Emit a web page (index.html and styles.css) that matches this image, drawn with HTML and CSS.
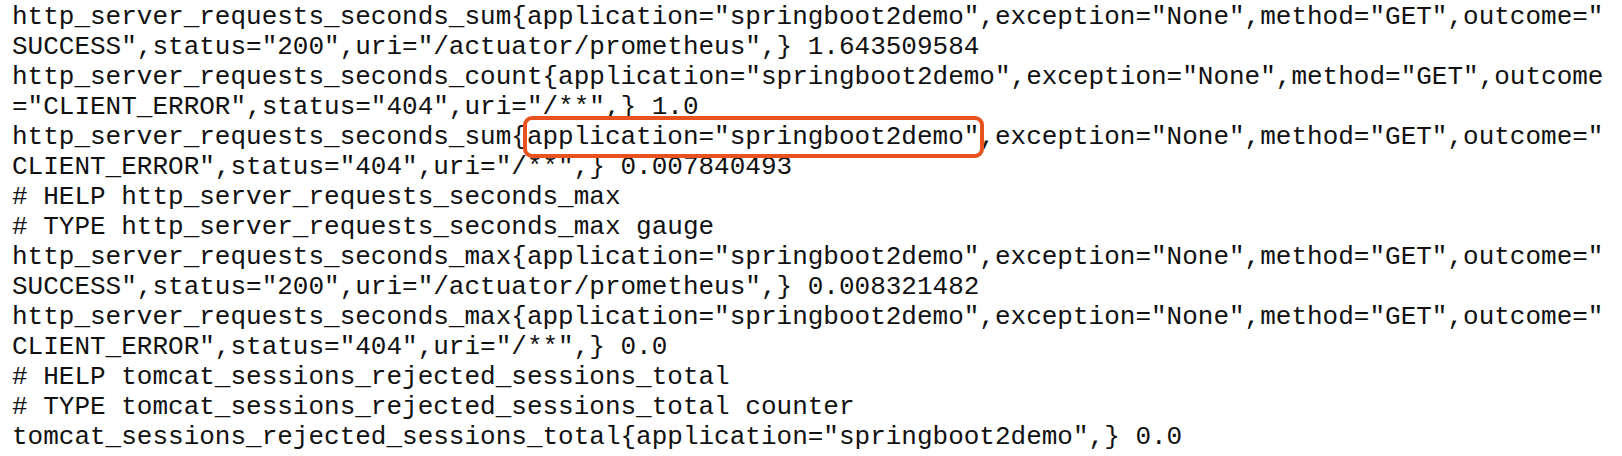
FILE: index.html
```html
<!DOCTYPE html>
<html lang="en">
<head>
  <meta charset="UTF-8">
  <title>Prometheus metrics</title>
  <link rel="stylesheet" href="styles.css">
</head>
<body>

  <pre class="metrics">http_server_requests_seconds_sum{application="springboot2demo",exception="None",method="GET",outcome="
SUCCESS",status="200",uri="/actuator/prometheus",} 1.643509584
http_server_requests_seconds_count{application="springboot2demo",exception="None",method="GET",outcome
="CLIENT_ERROR",status="404",uri="/**",} 1.0
http_server_requests_seconds_sum{<span class="mark">application="springboot2demo"</span>,exception="None",method="GET",outcome="
CLIENT_ERROR",status="404",uri="/**",} 0.007840493
# HELP http_server_requests_seconds_max
# TYPE http_server_requests_seconds_max gauge
http_server_requests_seconds_max{application="springboot2demo",exception="None",method="GET",outcome="
SUCCESS",status="200",uri="/actuator/prometheus",} 0.008321482
http_server_requests_seconds_max{application="springboot2demo",exception="None",method="GET",outcome="
CLIENT_ERROR",status="404",uri="/**",} 0.0
# HELP tomcat_sessions_rejected_sessions_total
# TYPE tomcat_sessions_rejected_sessions_total counter
tomcat_sessions_rejected_sessions_total{application="springboot2demo",} 0.0</pre>

</body>
</html>
```

FILE: styles.css
```css
* {
  box-sizing: border-box;
}

body {
  margin: 0;
  padding: 0;
  background: #fff;
}

.metrics {
  margin: 0;
  padding: 2px 0 0 12px;
  font-family: "Liberation Mono", "Courier New", monospace;
  font-size: 26px;
  line-height: 30px;
  color: #111;
  white-space: pre;
}

.mark {
  position: relative;
}

.mark::after {
  content: "";
  position: absolute;
  left: -4px;
  right: -5px;
  top: -6px;
  bottom: -6px;
  border: 4px solid #e8521e;
  border-radius: 9px;
}
```
